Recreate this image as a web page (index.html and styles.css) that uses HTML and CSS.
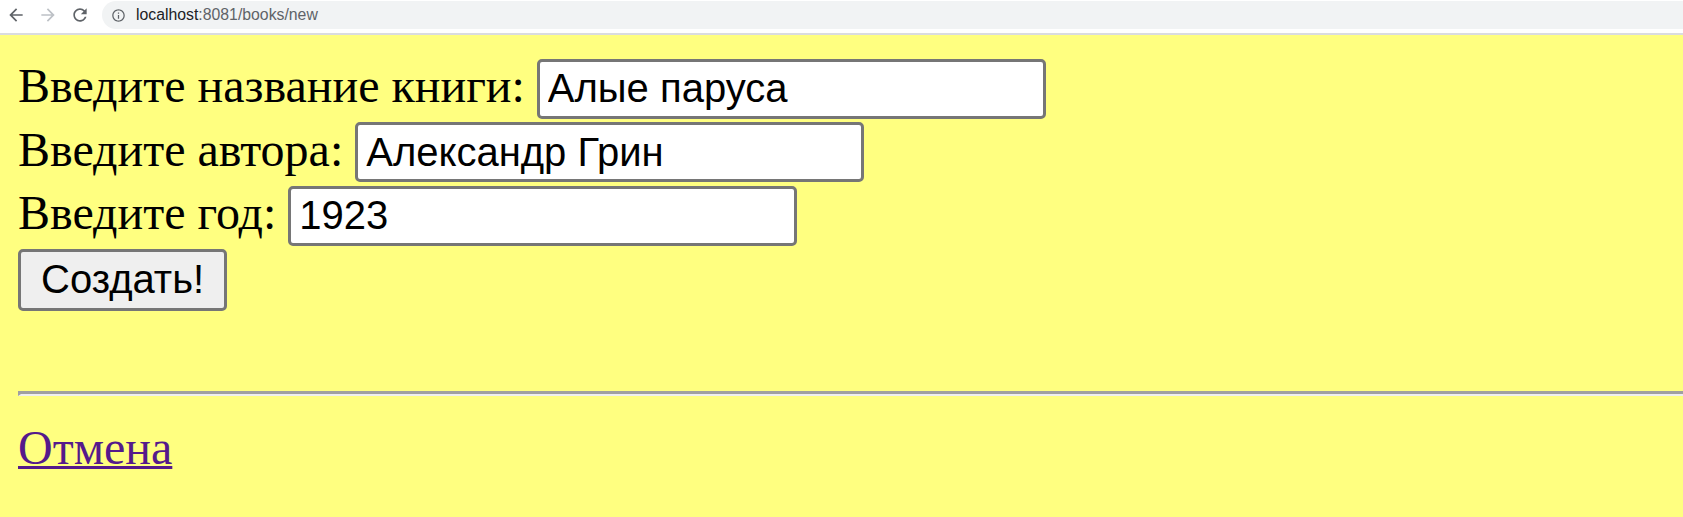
FILE: index.html
```html
<!DOCTYPE html>
<html lang="ru">
<head>
<meta charset="utf-8">
<title>Новая книга</title>
<link rel="stylesheet" href="styles.css">
</head>
<body>
<header class="toolbar">
  <svg class="nav-icon" viewBox="0 0 24 24" width="20" height="20"><path fill="#5f6368" d="M20 11H7.83l5.59-5.59L12 4l-8 8 8 8 1.41-1.41L7.83 13H20v-2z"/></svg>
  <svg class="nav-icon" viewBox="0 0 24 24" width="20" height="20"><path fill="#bdc1c6" d="M12 4l-1.41 1.41L16.17 11H4v2h12.17l-5.58 5.59L12 20l8-8z"/></svg>
  <svg class="nav-icon" viewBox="0 0 24 24" width="20" height="20"><path fill="#5f6368" d="M17.65 6.35C16.2 4.9 14.21 4 12 4c-4.42 0-7.99 3.58-7.99 8s3.57 8 7.99 8c3.73 0 6.84-2.55 7.73-6h-2.08c-.82 2.33-3.04 4-5.65 4-3.31 0-6-2.69-6-6s2.69-6 6-6c1.66 0 3.14.69 4.22 1.78L13 11h7V4l-2.35 2.35z"/></svg>
  <div class="omnibox">
    <svg class="info-icon" viewBox="0 0 24 24" width="15" height="15"><path fill="#5f6368" d="M11 7h2v2h-2zm0 4h2v6h-2zm1-9C6.48 2 2 6.48 2 12s4.48 10 10 10 10-4.48 10-10S17.52 2 12 2zm0 18c-4.41 0-8-3.59-8-8s3.59-8 8-8 8 3.59 8 8-3.59 8-8 8z"/></svg>
    <span class="url"><span class="host">localhost</span>:8081/books/new</span>
  </div>
</header>
<main class="page">
  <form class="book-form">
    <div class="row">
      <label for="title">Введите название книги:</label>
      <input id="title" type="text" value="Алые паруса">
    </div>
    <div class="row">
      <label for="author">Введите автора:</label>
      <input id="author" type="text" value="Александр Грин">
    </div>
    <div class="row">
      <label for="year">Введите год:</label>
      <input id="year" type="text" value="1923">
    </div>
    <div class="row">
      <button type="button" class="submit">Создать!</button>
    </div>
  </form>
  <hr class="divider">
  <a class="cancel" href="#">Отмена</a>
</main>
</body>
</html>
```
FILE: styles.css
```css
html, body {
  margin: 0;
  padding: 0;
}

body {
  background: #ffff80;
  overflow: hidden;
}

.toolbar {
  height: 35px;
  box-sizing: border-box;
  padding: 0 0 3px 6px;
  display: flex;
  align-items: center;
  gap: 12px;
  background: #ffffff;
  border-bottom: 2px solid #dadce0;
}

.nav-icon {
  flex: none;
  display: block;
}

.omnibox {
  flex: 1;
  height: 28px;
  display: flex;
  align-items: center;
  gap: 10px;
  padding-left: 9px;
  background: #f1f3f4;
  border-radius: 14px 0 0 14px;
}

.info-icon {
  display: block;
  flex: none;
}

.url {
  font-family: "Liberation Sans", Arial, sans-serif;
  font-size: 15.8px;
  color: #5f6368;
}

.host {
  color: #202124;
}

.page {
  height: 482px;
  box-sizing: border-box;
  padding: 23px 0 0 18px;
  background: #ffff80;
  font-family: "Liberation Serif", "Times New Roman", serif;
  font-size: 48px;
  color: #000;
}

.book-form {
  display: flex;
  flex-direction: column;
  gap: 3px;
  margin: 0;
}

.row {
  display: flex;
  align-items: baseline;
  gap: 12px;
}

.row label {
  line-height: 55px;
}

.row input {
  box-sizing: border-box;
  width: 509px;
  height: 60px;
  margin: 0;
  padding: 0 8px;
  border: 3px solid #767676;
  border-radius: 5px;
  background: #fff;
  font-family: "Liberation Sans", Arial, sans-serif;
  font-size: 40px;
  color: #000;
  outline: none;
}

.submit {
  box-sizing: border-box;
  height: 62px;
  margin: 0;
  padding: 0 20px;
  border: 3px solid #767676;
  border-radius: 5px;
  background: #efefef;
  font-family: "Liberation Sans", Arial, sans-serif;
  font-size: 40px;
  color: #000;
}

.divider {
  height: 0;
  margin: 80px 0 24px 0;
  border-style: solid;
  border-width: 3px 0 2px 3px;
  border-color: #a0a0a0 #efefef #efefef #a0a0a0;
}

.cancel {
  display: inline-block;
  line-height: 55px;
  color: #551a8b;
  text-decoration: underline;
  text-decoration-thickness: 3px;
}
```
